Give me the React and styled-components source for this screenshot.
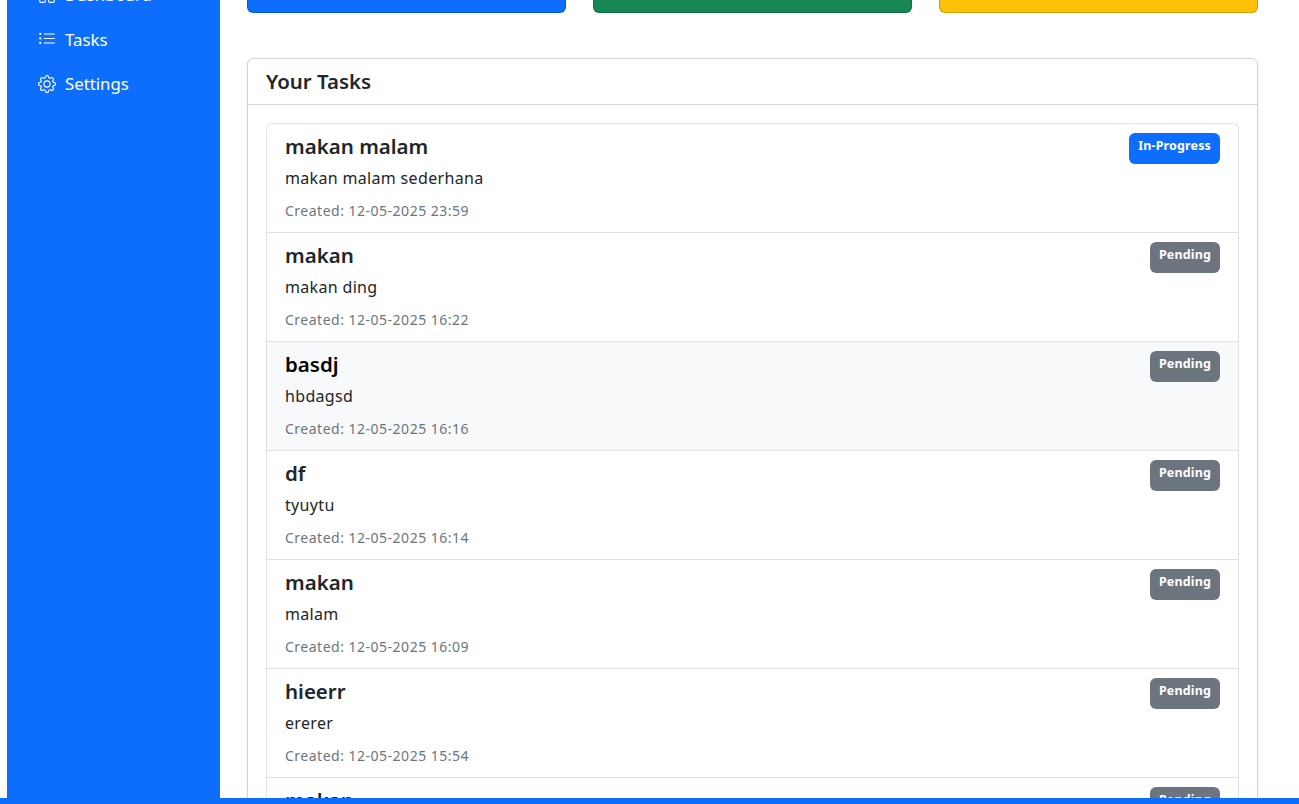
import React from 'react';
import styled, { createGlobalStyle } from 'styled-components';
import { BsGrid, BsListUl, BsGear } from 'react-icons/bs';

const GlobalStyle = createGlobalStyle`
  * {
    box-sizing: border-box;
  }
  html,
  body {
    margin: 0;
    height: 100%;
    overflow: hidden;
    background: #ffffff;
  }
  body {
    font-family: 'Noto Sans', 'Open Sans', 'Liberation Sans', sans-serif;
    color: #212529;
  }
`;

// the page was photographed scrolled down, so the shell is shifted up
const Shell = styled.div`
  display: flex;
  height: 804px;
  overflow: hidden;
  padding-left: 7px;
`;

const Sidebar = styled.nav`
  flex: 0 0 213px;
  background: #0d6efd;
  display: flex;
  flex-direction: column;
  gap: 22.5px;
  padding: 0 0 0 31px;
  margin-top: -16px;
`;

const NavLink = styled.a`
  display: flex;
  align-items: center;
  gap: 9px;
  height: 22px;
  color: #ffffff;
  font-size: 16.8px;
  line-height: 22px;
  white-space: nowrap;

  svg {
    flex: 0 0 18px;
    width: 18px;
    height: 18px;
    margin-top: -1px;
  }
`;

const Main = styled.main`
  flex: 1;
  min-width: 0;
  padding: 0 41px 0 27px;
`;

const StatRow = styled.div`
  display: grid;
  grid-template-columns: repeat(3, 319px);
  gap: 27px;
  margin-bottom: 45px;
`;

const StatCard = styled.div`
  height: 13px;
  background: ${props => props.color};
  border: 1px solid rgba(0, 0, 0, 0.18);
  border-top: 0;
  border-radius: 0 0 6px 6px;
`;

const Card = styled.section`
  border: 1px solid #d3d4d5;
  border-radius: 6px 6px 0 0;
  box-shadow: 0 2px 4px rgba(0, 0, 0, 0.075);
`;

const CardHeader = styled.h2`
  margin: 0;
  height: 46px;
  padding: 0 18px;
  border-bottom: 1px solid #d3d4d5;
  font-size: 20.4px;
  font-weight: 600;
  line-height: 45px;
`;

const CardBody = styled.div`
  padding: 18px 18px 0;
`;

const TaskList = styled.ul`
  margin: 0;
  padding: 0;
  list-style: none;
  border: 1px solid #dee2e6;
  border-bottom: 0;
  border-radius: 6px 6px 0 0;
`;

const TaskItem = styled.li`
  display: flex;
  justify-content: space-between;
  align-items: flex-start;
  height: 109px;
  padding: 9px 18px 0 18px;
  border-bottom: 1px solid #dee2e6;
  background: ${props => (props.$hover ? '#f8f9fa' : 'transparent')};
  color: ${props => (props.$hover ? '#000000' : '#212529')};
`;

const TaskTitle = styled.h5`
  margin: 0 0 7px;
  font-size: 20.5px;
  font-weight: 600;
  line-height: 26px;
`;

const TaskText = styled.p`
  margin: 0 0 10px;
  font-size: 16px;
  line-height: 24px;
  letter-spacing: 0.33px;
  color: #212529;
`;

const TaskDate = styled.small`
  display: block;
  font-size: 14px;
  line-height: 21px;
  letter-spacing: 0.5px;
  color: #6c757d;
`;

const Badge = styled.span`
  flex: none;
  height: 31px;
  padding: 5px 9px 0;
  border-radius: 6px;
  background: ${props => props.color};
  color: #ffffff;
  font-size: 12.5px;
  font-weight: 700;
  line-height: 16px;
  letter-spacing: 0.15px;
`;

const tasks = [
  { title: 'makan malam', text: 'makan malam sederhana', date: '12-05-2025 23:59', status: 'In-Progress' },
  { title: 'makan', text: 'makan ding', date: '12-05-2025 16:22', status: 'Pending' },
  { title: 'basdj', text: 'hbdagsd', date: '12-05-2025 16:16', status: 'Pending', hover: true },
  { title: 'df', text: 'tyuytu', date: '12-05-2025 16:14', status: 'Pending' },
  { title: 'makan', text: 'malam', date: '12-05-2025 16:09', status: 'Pending' },
  { title: 'hieerr', text: 'ererer', date: '12-05-2025 15:54', status: 'Pending' },
  { title: 'makan', text: 'malam', date: '12-05-2025 15:50', status: 'Pending' }
];

const Footer = styled.div`
  position: fixed;
  left: 0;
  right: 0;
  bottom: 0;
  height: 6px;
  background: #0d6efd;
`;

export default function App() {
  return (
    <React.Fragment>
      <GlobalStyle />
      <Shell>
        <Sidebar>
          <NavLink>
            <BsGrid />
            Dashboard
          </NavLink>
          <NavLink>
            <BsListUl />
            Tasks
          </NavLink>
          <NavLink>
            <BsGear />
            Settings
          </NavLink>
        </Sidebar>
        <Main>
          <StatRow>
            <StatCard color="#0d6efd" />
            <StatCard color="#198754" />
            <StatCard color="#ffc107" />
          </StatRow>
          <Card>
            <CardHeader>Your Tasks</CardHeader>
            <CardBody>
              <TaskList>
                {tasks.map((task, i) => (
                  <TaskItem key={i} $hover={task.hover}>
                    <div>
                      <TaskTitle>{task.title}</TaskTitle>
                      <TaskText>{task.text}</TaskText>
                      <TaskDate>Created: {task.date}</TaskDate>
                    </div>
                    <Badge color={task.status === 'Pending' ? '#6c757d' : '#0d6efd'}>
                      {task.status}
                    </Badge>
                  </TaskItem>
                ))}
              </TaskList>
            </CardBody>
          </Card>
        </Main>
      </Shell>
      <Footer />
    </React.Fragment>
  );
}
